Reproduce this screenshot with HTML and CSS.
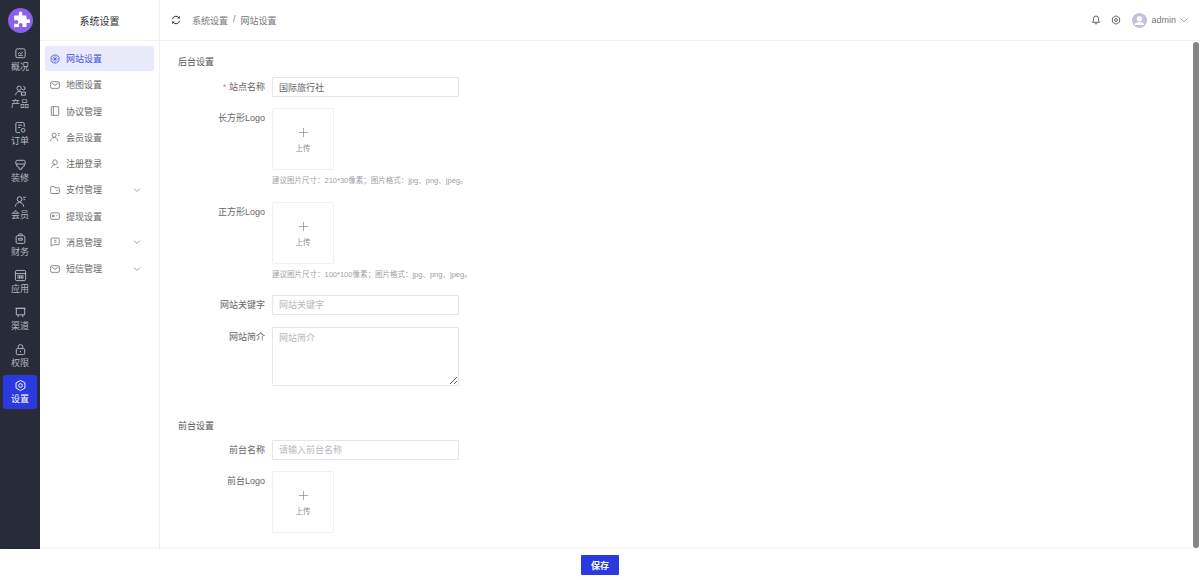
FILE: index.html
```html
<!DOCTYPE html>
<html lang="zh">
<head>
<meta charset="utf-8">
<title>网站设置</title>
<link rel="stylesheet" href="styles.css">
</head>
<body>
<div class="app">
  <div class="shell">
  <aside class="rail">
    <div class="logo"><svg viewBox="0 0 24 24" width="19" height="19"><path fill="#fff" d="M9.700 3a2.400 2.400 0 0 1 4.800 0c0 .8-.4 1.200-.4 1.800 0 .5.400.8 1 .8h3.200c.8 0 1.300.5 1.300 1.300v3c0 .6.400.9.900.9.600 0 1-.5 1.900-.5a2.500 2.500 0 0 1 0 5c-.9 0-1.300-.5-1.900-.5-.5 0-.9.300-.9.900v3.100c0 .8-.5 1.300-1.300 1.300h-3.300c-.6 0-.8-.4-.8-.9 0-.6.500-1 .5-1.800a2.400 2.400 0 0 0-4.800 0c0 .8.500 1.200.5 1.800 0 .5-.3.900-.9.900H5.300C4.500 21.600 4 21.100 4 20.300v-3.500c0-.6.400-.9.900-.9.600 0 1 .5 1.800.5a2.500 2.500 0 0 0 0-5c-.8 0-1.200.5-1.800.5-.5 0-.9-.3-.9-.9V6.900C4 6.100 4.500 5.600 5.300 5.600h3.900c.6 0 1-.3 1-.8 0-.6-.5-1-.5-1.800z"/></svg></div>
    <nav class="rail-nav">
      <a class="rail-item"><svg class="ri" viewBox="0 0 14 14"><rect x="2" y="2" width="10" height="9.500" rx="1.500"/><path d="M4.500 7.500 6 6l1.300 1.200L9.500 5.500M4.500 9h5"/></svg><span>概况</span></a>
      <a class="rail-item"><svg class="ri" viewBox="0 0 14 14"><circle cx="5.500" cy="4.500" r="2.300"/><path d="M1.800 12c.2-2.500 1.800-4 3.700-4 .9 0 1.700.3 2.300.8"/><path d="M10 2.500l1.800 1v2l-1.800 1-1.500-1"/><rect x="8" y="8.800" width="4.200" height="3.200"/></svg><span>产品</span></a>
      <a class="rail-item"><svg class="ri" viewBox="0 0 14 14"><path d="M6.500 12.500h-3A1.500 1.500 0 0 1 2 11V3a1.500 1.500 0 0 1 1.500-1.500h6A1.500 1.500 0 0 1 11 3v3.500"/><path d="M4.500 4.500h4M4.500 7H7"/><circle cx="9.800" cy="10" r="2"/></svg><span>订单</span></a>
      <a class="rail-item"><svg class="ri" viewBox="0 0 14 14"><path d="M3.500 2.500h7A1.500 1.500 0 0 1 12 4v2.500H2V4a1.500 1.500 0 0 1 1.500-1.500z"/><path d="M3 6.500V9l2.500 1.200V12h3v-1.800L11 9V6.500"/></svg><span>装修</span></a>
      <a class="rail-item"><svg class="ri" viewBox="0 0 14 14"><circle cx="6" cy="4.500" r="2.600"/><path d="M1.500 12.500c.2-2.800 2.100-4.500 4.500-4.500s4.300 1.700 4.500 4.500"/><path d="M9.800 2.500h3M10.300 5h1.700"/></svg><span>会员</span></a>
      <a class="rail-item"><svg class="ri" viewBox="0 0 14 14"><rect x="2.300" y="4" width="9.400" height="8.300" rx="1.500"/><path d="M5 4V3a1 1 0 0 1 1-1h2a1 1 0 0 1 1 1v1M5 6.800h4v2H5z"/></svg><span>财务</span></a>
      <a class="rail-item"><svg class="ri" viewBox="0 0 14 14"><rect x="1.500" y="1.500" width="11" height="11" rx="1.500"/><path d="M1.500 5h11M3.500 7.500h7M3.500 9.500h7M6 7v3.500M8.500 7v3.500"/></svg><span>应用</span></a>
      <a class="rail-item"><svg class="ri" viewBox="0 0 14 14"><path d="M2.500 2.500h9v7h-9zM1.500 2.500h11M4.500 9.500v2.500M9.500 9.500v2.500"/></svg><span>渠道</span></a>
      <a class="rail-item"><svg class="ri" viewBox="0 0 14 14"><rect x="2.500" y="6" width="9" height="6.500" rx="1.200"/><path d="M4.500 6V4.200a2.500 2.500 0 0 1 5 0V6M7 8.500v1.500"/></svg><span>权限</span></a>
      <a class="rail-item is-active"><svg class="ri" viewBox="0 0 14 14"><path d="M7 1.500l4.800 2.750v5.500L7 12.500l-4.800-2.750v-5.500z"/><circle cx="7" cy="7" r="2"/></svg><span>设置</span></a>
    </nav>
  </aside>

  <aside class="side">
    <div class="side-title">系统设置</div>
    <nav class="menu">
      <a class="menu-item is-active"><svg class="mi" viewBox="0 0 12 12"><circle cx="6" cy="6" r="4.900"/><path d="M1.300 6h9.400M6 1.300v9.400M3 2.800 9 9.200M9 2.800 3 9.200" stroke-width=".7"/></svg><span>网站设置</span></a>
      <a class="menu-item"><svg class="mi" viewBox="0 0 12 12"><rect x=".8" y="2" width="10.400" height="8" rx="1.300"/><path d="M2 3.500 6 6.500l4-3"/></svg><span>地图设置</span></a>
      <a class="menu-item"><svg class="mi" viewBox="0 0 12 12"><rect x="1.500" y=".8" width="9" height="10.400" rx=".6"/><path d="M4 .8v10.400"/></svg><span>协议管理</span></a>
      <a class="menu-item"><svg class="mi" viewBox="0 0 12 12"><circle cx="5" cy="3.800" r="2.500"/><path d="M.6 11c.2-2.600 2-4.300 4.400-4.300S9.200 8.400 9.400 11M9.200 2h2.500M9.700 4.200h1.500"/></svg><span>会员设置</span></a>
      <a class="menu-item"><svg class="mi" viewBox="0 0 12 12"><circle cx="6" cy="3.800" r="2.800"/><path d="M1.800 11c.2-2.400 1.900-4.100 4.200-4.100M7.800 10.300h2.800"/></svg><span>注册登录</span></a>
      <a class="menu-item"><svg class="mi" viewBox="0 0 12 12"><path d="M.8 2.800a1 1 0 0 1 1-1h2.900l1 1.500h4.500a1 1 0 0 1 1 1V9.200a1 1 0 0 1-1 1H1.800a1 1 0 0 1-1-1z"/><path d="M7.500 6.500h1.800"/></svg><span>支付管理</span><svg class="chev" viewBox="0 0 8 8"><path d="M1 2.500 4 5.500 7 2.500"/></svg></a>
      <a class="menu-item"><svg class="mi" viewBox="0 0 12 12"><rect x=".8" y="2.200" width="10.400" height="7.800" rx="1.300"/><path d="M7.500 6 9.200 4.800M3 5h2v2H3z"/></svg><span>提现设置</span></a>
      <a class="menu-item"><svg class="mi" viewBox="0 0 12 12"><path d="M2.500 1.300h7.500a1 1 0 0 1 1 1v6a1 1 0 0 1-1 1H3.800L1.300 11V2.300a1 1 0 0 1 1-1z"/><path d="M5 4h2.800M5 6.200h2.800"/></svg><span>消息管理</span><svg class="chev" viewBox="0 0 8 8"><path d="M1 2.500 4 5.500 7 2.500"/></svg></a>
      <a class="menu-item"><svg class="mi" viewBox="0 0 12 12"><rect x=".8" y="2" width="10.400" height="8" rx="1.300"/><path d="M2 3.500 6 6.500l4-3"/></svg><span>短信管理</span><svg class="chev" viewBox="0 0 8 8"><path d="M1 2.500 4 5.500 7 2.500"/></svg></a>
    </nav>
  </aside>

  <div class="main">
    <header class="top">
      <svg class="refresh" viewBox="0 0 12 12"><path d="M1.800 5A4.300 4.300 0 0 1 9.300 3M10.200 7A4.300 4.300 0 0 1 2.700 9"/><path class="fill" d="M10.600 1.200v3H7.600zM1.400 10.800v-3h3z"/></svg>
      <div class="crumbs"><span>系统设置</span><span class="sep">/</span><span>网站设置</span></div>
      <div class="top-right">
        <svg class="ti" viewBox="0 0 12 12"><path d="M6 1.200a3 3 0 0 1 3 3V7l1.200 1.800H1.800L3 7V4.200a3 3 0 0 1 3-3zM4.800 10.500h2.400"/></svg>
        <svg class="ti" viewBox="0 0 12 12"><path d="M6 1l4.300 2.500v5L6 11 1.700 8.500v-5z"/><circle cx="6" cy="6" r="1.700"/></svg>
        <div class="user">
          <svg class="avatar" viewBox="0 0 16 16"><circle cx="8" cy="8" r="8" fill="#c0c4d4"/><circle cx="8" cy="6" r="2.800" fill="#fff"/><path d="M3 12.500c0-2 2-3 5-3s5 1 5 3v.3H3z" fill="#fff"/></svg>
          <span>admin</span>
          <svg class="chev" viewBox="0 0 8 8"><path d="M.5 2.500 4 5.800 7.500 2.500"/></svg>
        </div>
      </div>
    </header>
    <div class="body">
      <main class="content">
        <h2 class="sec">后台设置</h2>
        <div class="row">
          <label class="lab"><i>*</i> 站点名称</label>
          <input class="inp" value="国际旅行社">
        </div>
        <div class="row with-hint">
          <label class="lab">长方形Logo</label>
          <div>
            <div class="upload"><svg class="plus" viewBox="0 0 12 12"><path d="M6 1v10M1 6h10"/></svg><span>上传</span></div>
            <p class="hint">建议图片尺寸：210*30像素；图片格式：jpg、png、jpeg。</p>
          </div>
        </div>
        <div class="row with-hint">
          <label class="lab">正方形Logo</label>
          <div>
            <div class="upload"><svg class="plus" viewBox="0 0 12 12"><path d="M6 1v10M1 6h10"/></svg><span>上传</span></div>
            <p class="hint">建议图片尺寸：100*100像素；图片格式：jpg、png、jpeg。</p>
          </div>
        </div>
        <div class="row row-tight">
          <label class="lab">网站关键字</label>
          <input class="inp" placeholder="网站关键字">
        </div>
        <div class="row">
          <label class="lab">网站简介</label>
          <textarea class="area" placeholder="网站简介"></textarea>
        </div>
        <h2 class="sec sec2">前台设置</h2>
        <div class="row">
          <label class="lab">前台名称</label>
          <input class="inp" placeholder="请输入前台名称">
        </div>
        <div class="row">
          <label class="lab">前台Logo</label>
          <div class="upload"><svg class="plus" viewBox="0 0 12 12"><path d="M6 1v10M1 6h10"/></svg><span>上传</span></div>
        </div>
      </main>
      <div class="track"><div class="thumb"></div></div>
    </div>
  </div>
  </div>
  <footer class="foot"><button class="save">保存</button></footer>
</div>
</body>
</html>
```
FILE: styles.css
```css
* { box-sizing: border-box; }
html, body { margin: 0; height: 100%; overflow: hidden; }
body { font-family: "Liberation Sans", "Noto Sans CJK SC", sans-serif; font-size: 9px; color: #666; background: #fff; }
.app { display: flex; flex-direction: column; width: 1200px; height: 580px; }
.shell { flex: 1; min-height: 0; display: flex; }

.rail { width: 40px; flex: none; background: #282c38; display: flex; flex-direction: column; align-items: center; padding-top: 8px; }
.logo { width: 25px; height: 25px; border-radius: 50%; background: #8b5ff0; display: flex; align-items: center; justify-content: center; flex: none; }
.rail-nav { margin-top: 8px; width: 100%; display: flex; flex-direction: column; }
.rail-item { height: 36.900px; margin: 0 3px; padding-top: 2px; display: flex; flex-direction: column; align-items: center; justify-content: center; gap: 2px; color: #b5b8c2; line-height: 11px; border-radius: 3px; }
.rail-item.is-active { background: #2a39e0; color: #fff; height: 34px; margin-top: 2px; padding-top: 0; }
.ri { width: 13px; height: 13px; fill: none; stroke: currentColor; stroke-width: 1.050; }

.side { width: 120px; flex: none; background: #fff; border-right: 1px solid #eef0f5; }
.side-title { height: 41px; display: flex; align-items: center; justify-content: center; font-size: 10px; color: #333; border-bottom: 1px solid #f0f2f7; }
.menu { padding: 5px 5px 0; display: flex; flex-direction: column; }
.menu-item { height: 25px; margin-bottom: 1.250px; display: flex; align-items: center; padding: 0 13px 0 5px; color: #666; border-radius: 2px; }
.menu-item.is-active { background: #e9ebfc; color: #4553e0; }
.mi { width: 10px; height: 10px; margin-right: 6px; fill: none; stroke: currentColor; stroke-width: .9; }
.chev { width: 8px; height: 8px; margin-left: auto; fill: none; stroke: #888; stroke-width: .8; }

.main { flex: 1; min-width: 0; display: flex; flex-direction: column; }
.top { height: 41px; flex: none; display: flex; align-items: center; padding: 0 12px 0 11px; border-bottom: 1px solid #eef0f6; }
.refresh { width: 10px; height: 10px; fill: none; stroke: #222; stroke-width: 1.100; }
.refresh .fill { fill: #222; stroke: none; }
.crumbs { margin-left: 11px; display: flex; gap: 5px; color: #777; }
.top-right { margin-left: auto; display: flex; align-items: center; gap: 10px; }
.ti { width: 10px; height: 10px; fill: none; stroke: #333; stroke-width: .9; }
.user { display: flex; align-items: center; gap: 4px; margin-left: 1px; color: #777; }
.avatar { width: 15px; height: 15px; }
.user .chev { width: 8px; margin-left: 0; }

.body { flex: 1; min-height: 0; display: flex; }
.content { flex: 1; overflow: hidden; padding: 15px 0 0 18px; }
.track { width: 8px; flex: none; padding: 1px; }
.thumb { width: 6px; height: 506px; border-radius: 3px; background: #858585; }

.sec { margin: 0 0 9px; height: 12px; font-size: 9px; font-weight: 400; line-height: 12px; color: #555; }
.sec2 { margin-top: 34px; margin-bottom: 8px; }
.row { display: flex; align-items: flex-start; margin-bottom: 11px; }
.row-tight { margin-bottom: 12px; }
.with-hint { margin-bottom: 16px; }
.with-hint + .with-hint { margin-bottom: 15px; }
.lab { width: 94px; padding-right: 7px; text-align: right; line-height: 20px; color: #666; flex: none; white-space: nowrap; }
.lab i { color: #f56c6c; font-style: normal; }
.inp { width: 187px; height: 20px; border: 1px solid #e6e7ea; border-radius: 1px; padding: 0 6px; font: inherit; color: #606266; outline: none; background: #fff; }
.inp::placeholder, .area::placeholder { color: #b5b8bf; }
.area { display: block; width: 187px; height: 59px; border: 1px solid #e6e7ea; border-radius: 1px; padding: 3px 6px; font: inherit; outline: none; margin: 0; }
.upload { width: 62px; height: 62px; border: 1px solid #f0f1f4; border-radius: 2px; display: flex; flex-direction: column; align-items: center; justify-content: center; color: #8a8d94; font-size: 7.500px; line-height: 11px; padding-top: 2px; gap: 5px; }
.plus { width: 11px; height: 11px; fill: none; stroke: #8a8d94; stroke-width: .8; }
.hint { margin: 5px 0 0; height: 11px; line-height: 11px; font-size: 7.500px; color: #9da0a6; white-space: nowrap; }

.foot { height: 31px; flex: none; display: flex; justify-content: center; align-items: center; padding-top: 1px; background: #fff; box-shadow: 0 -1px 4px rgba(0,0,0,.05); position: relative; }
.save { width: 38px; height: 20px; border: 0; border-radius: 1px; background: #2a39e0; color: #fff; font: inherit; font-weight: 700; padding: 0; }
```
